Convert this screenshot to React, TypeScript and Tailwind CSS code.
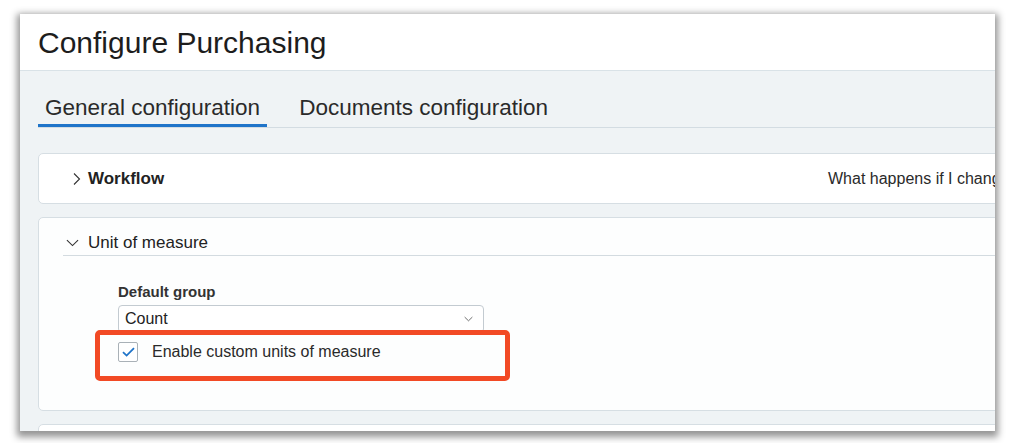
import React from "react";

const font = { fontFamily: '"Liberation Sans", Arial, Helvetica, sans-serif' };

function ChevronRight() {
  return (
    <svg width="8" height="14" viewBox="0 0 8 14" className="shrink-0">
      <path d="M1 1.5 L6.5 7 L1 12.5" fill="none" stroke="#333" strokeWidth="1.1" />
    </svg>
  );
}

function ChevronDown({ w = 14, h = 8, color = "#333" }: { w?: number; h?: number; color?: string }) {
  return (
    <svg width={w} height={h} viewBox="0 0 14 8" className="shrink-0">
      <path d="M1 1 L7 6.8 L13 1" fill="none" stroke={color} strokeWidth="1.2" />
    </svg>
  );
}

export default function App() {
  return (
    <div className="w-[1016px] h-[443px] bg-white pt-[14px] pl-[20px] overflow-hidden" style={font}>
      <div className="relative w-[975px] h-[417px] overflow-hidden bg-[#eff3f5] shadow-[0_3px_7px_3px_rgba(0,0,0,0.42)]">
        {/* Header */}
        <div className="h-[57px] bg-white border-b border-[#d9e2e7] flex items-center pl-[18px]">
          <h1 className="text-[30px] leading-[34px] text-[#1d1d1d] mt-[1px]">Configure Purchasing</h1>
        </div>

        {/* Tabs */}
        <div className="mt-[19px] ml-[18px] w-[1000px] border-b border-[#d3dce2] flex gap-[25px]">
          <div className="px-[7px] pt-[2px] h-[37px] border-b-[3px] border-[#1f74c9] -mb-px text-[22.5px] leading-[32px] text-[#2a2a2a]">
            General configuration
          </div>
          <div className="px-[7px] pt-[2px] h-[37px] text-[22.5px] leading-[32px] text-[#2a2a2a]">
            Documents configuration
          </div>
        </div>

        {/* Cards */}
        <div className="ml-[18px] mt-[25px] w-[1200px] flex flex-col gap-[13px]">
          {/* Workflow */}
          <div className="h-[51px] bg-white border border-[#d6dee3] rounded-[5px] flex items-center pl-[34px]">
            <div className="w-[755px] flex items-center">
              <ChevronRight />
              <span className="ml-[7px] text-[17px] font-bold text-[#222]">Workflow</span>
            </div>
            <span className="text-[16px] text-[#2a2a2a] whitespace-nowrap">What happens if I change the workflow?</span>
          </div>

          {/* Unit of measure */}
          <div className="h-[194px] bg-[#fdfefe] border border-[#d6dee3] rounded-[5px] pl-[24px] pt-[14px]">
            <div className="h-[24px] pb-[2px] border-b border-[#d3dbe0] flex items-center">
              <div className="w-[25px] pl-[3px] flex items-center">
                <ChevronDown w={13} h={8} />
              </div>
              <span className="text-[17px] leading-[22px] text-[#222]">Unit of measure</span>
            </div>
            <div className="pl-[55px] pt-[26px]">
              <div className="text-[15px] leading-[20px] font-bold text-[#333]">Default group</div>
              <div className="mt-[3px] w-[366px] h-[28px] border border-[#c3cbd1] rounded-[4px] bg-white flex items-center justify-between pl-[6px] pr-[10px]">
                <span className="text-[16px] text-[#222]">Count</span>
                <ChevronDown w={9} h={6} color="#444" />
              </div>
              <div className="mt-[7px] flex items-center">
                <div className="w-[20px] h-[20px] border border-[#a9b1b7] rounded-[2px] bg-white flex items-center justify-center">
                  <svg width="13" height="10" viewBox="0 0 13 10">
                    <path d="M1 5.2 L4.6 8.6 L12 1.2" fill="none" stroke="#1f74c9" strokeWidth="1.8" />
                  </svg>
                </div>
                <span className="ml-[14px] text-[16px] text-[#2a2a2a]">Enable custom units of measure</span>
              </div>
            </div>
          </div>

          {/* Next card (clipped) */}
          <div className="h-[40px] bg-white border border-[#d6dee3] rounded-[5px]" />
        </div>

        {/* Annotation highlight */}
        <div className="absolute left-[75px] top-[316px] w-[415px] h-[51px] border-[5px] border-[#f24a25] rounded-[5px]" />
      </div>
    </div>
  );
}
